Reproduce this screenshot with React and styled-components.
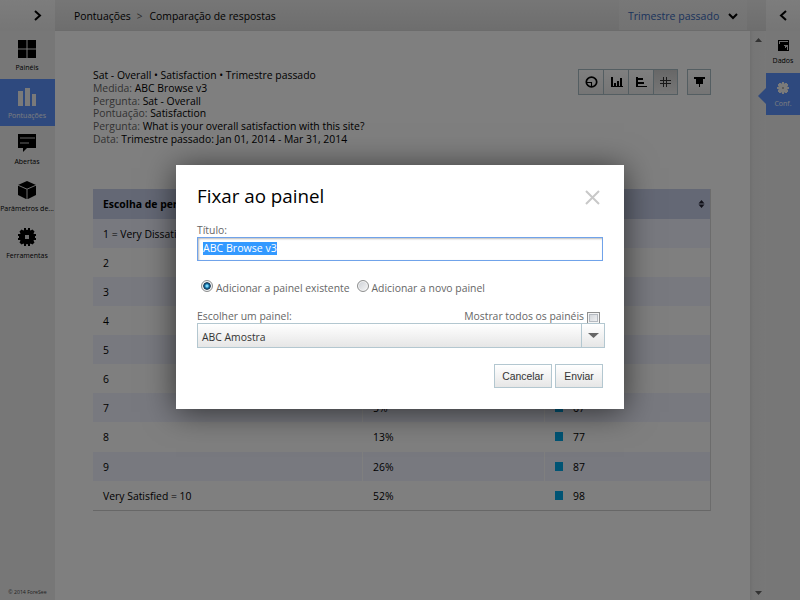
import React from "react";
import styled, { createGlobalStyle, css } from "styled-components";

const Global = createGlobalStyle`
  *, *::before, *::after { box-sizing: border-box; }
  html, body { margin: 0; padding: 0; overflow: hidden; background: #fff; }
  body { font-family: "Open Sans", "Noto Sans", sans-serif; font-size: 10.4px; color: #000; }
`;

const Page = styled.div`
  position: relative;
  display: grid;
  grid-template-columns: 55px 1fr 34px;
  width: 800px;
  height: 600px;
  overflow: hidden;
  background: #fff;
`;

const Sidebar = styled.nav`
  display: flex;
  flex-direction: column;
  background: #eee;
`;

const Toggle = styled.div`
  display: flex;
  align-items: center;
  justify-content: ${(p) => (p.$end ? "flex-end" : "center")};
  padding-right: ${(p) => (p.$end ? "13px" : "0")};
  height: 31px;
  flex: none;
  background: linear-gradient(#fafafa, #ececec);
`;

const NavItem = styled.div`
  position: relative;
  display: flex;
  flex-direction: column;
  align-items: center;
  flex: none;
  height: ${(p) => (p.$small ? 42 : 47)}px;
  padding-top: 9px;
  margin-top: ${(p) => (p.$gap ? "1px" : "0")};
  margin-bottom: ${(p) => (p.$gap ? "-1px" : "0")};
  white-space: nowrap;
  font-size: 7px;
  line-height: 10px;
  color: ${(p) => (p.$active ? "#f2f6ff" : "#000")};
  background: ${(p) => (p.$active ? "#5c92fc" : "transparent")};
  svg { flex: none; margin-bottom: 5px; }
`;

const MainNav = styled(Sidebar)`
  ${NavItem} { padding-right: 1px; }
`;

const Pointer = styled.svg`
  position: absolute;
  left: -8px;
  top: 15px;
`;

const Copyright = styled.div`
  margin-top: auto;
  padding-bottom: 3px;
  text-align: center;
  font-size: 5.2px;
  line-height: 10px;
  color: #444;
`;

const Main = styled.main`
  display: flex;
  flex-direction: column;
  min-width: 0;
`;

const TopBar = styled.header`
  display: flex;
  align-items: center;
  height: 31px;
  flex: none;
  padding: 1px 19px 0 19px;
  background: linear-gradient(#ededed, #dcdcdc);
  border-bottom: 1px solid #d8d8d8;
  white-space: nowrap;
`;

const CrumbSep = styled.span`
  margin: 0 7px 0 6px;
  font-size: 10px;
  color: #555;
`;

const Period = styled.div`
  display: flex;
  align-items: center;
  gap: 9px;
  width: 128px;
  height: 30px;
  margin-top: -1px;
  margin-left: auto;
  padding: 2px 0 0 9px;
  font-size: 10.55px;
  color: #3566b8;
  background: linear-gradient(#f0f0f0, #e6e6e6);
`;

const Body = styled.div`
  display: flex;
  flex: 1;
  min-height: 0;
`;

const Content = styled.section`
  flex: 1;
  padding: 38px 0 0 38px;
`;

const ScrollTrack = styled.div`
  display: flex;
  flex-direction: column;
  justify-content: space-between;
  align-items: center;
  width: 16px;
  padding: 7px 0 5px;
  background: linear-gradient(to right, #dedede, #ebebeb 3px, #f0f0f0);
`;

const Intro = styled.div`
  display: flex;
  justify-content: space-between;
  width: 618px;
  height: 120px;
`;

const Details = styled.div`
  white-space: nowrap;
`;

const Line = styled.div`
  height: 12.8px;
  line-height: 13px;
`;

const Label = styled.span`
  color: #666;
`;

const Tools = styled.div`
  display: flex;
  height: 26px;
  gap: 9px;
`;

const ToolGroup = styled.div`
  display: flex;
  border: 1px solid #a9bcc5;
`;

const Tool = styled.div`
  display: flex;
  align-items: center;
  justify-content: center;
  width: ${(p) => p.$w || 25}px;
  background: ${(p) => (p.$on ? "linear-gradient(#cfcfcf, #ededed)" : "linear-gradient(#fff, #ebebeb)")};
  border-left: ${(p) => (p.$divided ? "1px solid #a9bcc5" : "0")};
`;

const Table = styled.div`
  width: 618px;
  border-right: 1px solid #d9d9d9;
  border-bottom: 1px solid #cfcfcf;
`;

const Row = styled.div`
  display: grid;
  grid-template-columns: 269px 181px 1fr;
  gap: 1px;
  height: ${(p) => p.$h || 29}px;
`;

const HeadRow = styled(Row)`
  grid-template-columns: 1fr auto;
  align-items: center;
  height: 30px;
  padding: 0 5px 0 10px;
  font-weight: 700;
  background: #c8d0ea;
`;

const Cell = styled.div`
  display: flex;
  align-items: center;
  padding-left: 10px;
  background: ${(p) => (p.$alt ? "#f0f2fe" : "#fff")};
`;

const Swatch = styled.span`
  width: 8px;
  height: 9px;
  margin: -1px 10px 0 0;
  background: #00a8e8;
`;

const Overlay = styled.div`
  position: absolute;
  inset: 0;
  background: rgba(0, 0, 0, 0.5);
`;

const Dialog = styled.div`
  position: absolute;
  left: 176px;
  top: 165px;
  width: 448px;
  height: 244px;
  padding: 18px 19px 0 21px;
  background: #fff;
  box-shadow: 0 3px 30px rgba(0, 0, 0, 0.6);
  color: #666;
  white-space: nowrap;
`;

const DialogHead = styled.div`
  display: flex;
  justify-content: space-between;
  height: 41px;
  padding-right: 5px;
`;

const Title = styled.h1`
  margin: 0;
  font-size: 18.8px;
  font-weight: 400;
  line-height: 27px;
  color: #000;
`;

const CloseIcon = styled.svg`
  margin-top: 7px;
`;

const FieldLabel = styled.div`
  height: 13px;
  line-height: 13px;
`;

const TextField = styled.div`
  display: flex;
  align-items: flex-start;
  width: 406px;
  height: 24px;
  padding: 4px 5px 0;
  border: 1px solid #70a3ea;
  box-shadow: inset 1px 1px 2px #bbb;
`;

const Selected = styled.span`
  height: 13px;
  line-height: 13px;
  font-size: 10.6px;
  color: #fff;
  background: #3399ff;
`;

const Choices = styled.div`
  display: flex;
  height: 15px;
  margin: 19px 0 0 4px;
`;

const Radio = styled.span`
  flex: none;
  width: 12px;
  height: 12px;
  margin: 0 3px 0 0;
  border: 1px solid #8e8f8f;
  border-radius: 50%;
  box-shadow: inset 0 0 0 1px #f4f4f4;
  background: ${(p) =>
    p.$on
      ? "radial-gradient(circle at 50% 50%, #7fd8fa 0 1px, #1679b0 2px, #12314d 3.4px, #dce3e8 4.2px)"
      : "linear-gradient(135deg, #cbcfd5, #f6f6f6)"};
`;

const ChoiceText = styled.span`
  height: 15px;
  margin-top: 1px;
  margin-right: ${(p) => p.$mr || 0}px;
  line-height: 15px;
`;

const PickerHead = styled.div`
  display: flex;
  height: 13px;
  margin-top: 15px;
  line-height: 13px;
`;

const ShowAll = styled.span`
  display: flex;
  margin-left: auto;
  padding-right: 5px;
`;

const CheckBox = styled.span`
  width: 13px;
  height: 11px;
  margin: 2px 0 0 3px;
  border: 1px solid #8e8f8f;
  border-bottom: 0;
  box-shadow: inset 0 0 0 1px #f4f4f4, inset 0 0 0 2px #b5bac1;
  background: linear-gradient(135deg, #cbcfd5, #f6f6f6);
`;

const controlFace = css`
  border: 1px solid #b3c7d0;
  background: linear-gradient(#fff, #e6e6e6);
  color: #333;
`;

const Select = styled.div`
  ${controlFace}
  display: flex;
  align-items: center;
  width: 408px;
  height: 25px;
  padding-left: 4px;
`;

const SelectText = styled.span`
  padding-top: 2px;
`;

const SelectArrow = styled.span`
  display: flex;
  align-items: center;
  justify-content: center;
  width: 23px;
  height: 23px;
  margin-left: auto;
  border-left: 1px solid #b3c7d0;
`;

const Actions = styled.div`
  display: flex;
  justify-content: flex-end;
  gap: 3px;
  margin-top: 16px;
  padding-right: 2px;
`;

const Button = styled.div`
  ${controlFace}
  width: ${(p) => p.$w}px;
  height: 24px;
  line-height: 23px;
  text-align: center;
  font-family: "Liberation Sans", Arial, sans-serif;
  font-size: 10.4px;
`;

const Chevron = ({ d, w, h }) => (
  <svg width={w} height={h} viewBox={`0 0 ${w} ${h}`} fill="none" stroke="#000" strokeWidth="2">
    <path d={d} />
  </svg>
);

const Triangle = ({ w = 7, h = 4, up }) => (
  <svg width={w} height={h} viewBox="0 0 7 4" preserveAspectRatio="none">
    <path d={up ? "M0 4L3.5 0L7 4Z" : "M0 0H7L3.5 4Z"} fill="#666" />
  </svg>
);

const NavIcon = ({ children }) => (
  <svg width="18" height="18" viewBox="0 0 18 18">{children}</svg>
);

const PanelsIcon = () => (
  <NavIcon><path d="M0 0h8.500v8.500H0zM9.500 0H18v8.500H9.500zM0 9.500h8.500V18H0zM9.500 9.500H18V18H9.500z" /></NavIcon>
);
const ScoresIcon = () => (
  <NavIcon><path fill="#f4f4f4" d="M0 3h5v15H0zM7 0h5v18H7zM14 6h4v12h-4z" /></NavIcon>
);
const OpenIcon = () => (
  <NavIcon>
    <path d="M0 0h18v14H9l-4 4v-4H0z" />
    <path d="M2 4h15M2 9h9" stroke="#ccc" strokeWidth="1.2" />
  </NavIcon>
);
const CubeIcon = () => (
  <NavIcon>
    <path d="M9 0L18 4v10l-9 4.500L0 14V4z" />
    <path d="M0 4.200l9 4 9-4M9 8.200V18" stroke="#ddd" strokeWidth="1" fill="none" />
  </NavIcon>
);
const GearIcon = () => (
  <NavIcon>
    <circle cx="9" cy="9" r="7.300" />
    <path d="M6 0h2v2h2V0h2v3H6zM6 18h2v-2h2v2h2v-3H6zM0 6h3v6H0v-2h1V8H0zM18 6h-3v6h3v-2h-1V8h1zM1.500 3.500l2-2 3 1.500-3.500 3.500zM16.500 3.500l-2-2-3 1.500 3.500 3.500zM1.500 14.500l2 2 3-1.500-3.500-3.500zM16.500 14.500l-2 2-3-1.500 3.500-3.500z" />
    <path d="M7 7h4v4H7z" fill="#ddd" />
  </NavIcon>
);
const DataIcon = () => (
  <svg width="11" height="11" viewBox="0 0 11 11" shapeRendering="crispEdges">
    <path d="M0 0h11v11H0z" />
    <path d="M1 1h9v1H1zM1 2h1v2H1zM6 5h4v5H9V7H8v1H7V6H6z" fill="#ddd" />
  </svg>
);
const SmallGear = () => (
  <svg width="12" height="12" viewBox="0 0 12 12">
    <path fill="#f4f4f4" d="M5 0h2v1.500h1V1h2v1h1v2h-.5v1H12v2h-1.500v1h.5v2h-1v1H8v-.5H7V12H5v-1.500H4v.5H2v-1H1V8h.5V7H0V5h1.500V4H1V2h1V1h2v.5h1z" />
    <path fill="#777" d="M5 5.500h2v1H5z" />
  </svg>
);
const ToolIcon = ({ d, fill = "#000" }) => (
  <svg width="13" height="12" viewBox="0 0 13 12" shapeRendering="crispEdges">
    <path d={d} fill={fill} />
  </svg>
);
const PieIcon = () => (
  <svg width="13" height="12" viewBox="0 0 13 12">
    <ellipse cx="6.500" cy="6" rx="5.200" ry="4.800" fill="none" stroke="#000" strokeWidth="1.700" />
    <path d="M2 6.500h5M6.500 6v4" stroke="#000" strokeWidth="1.100" fill="none" />
  </svg>
);
const SortIcon = () => (
  <svg width="7" height="8" viewBox="0 0 7 8"><path d="M3.500 0L6.500 3.500h-6zM.5 4.500h6L3.500 8z" fill="#223" /></svg>
);

const rows = [
  ["1 = Very Dissatisfied", "1%", 10],
  ["2", "1%", 22],
  ["3", "1%", 31],
  ["4", "1%", 39],
  ["5", "1%", 47],
  ["6", "2%", 56],
  ["7", "5%", 67],
  ["8", "13%", 77],
  ["9", "26%", 87],
  ["Very Satisfied = 10", "52%", 98],
];

const details = [
  ["Medida:", "ABC Browse v3"],
  ["Pergunta:", "Sat - Overall"],
  ["Pontuação:", "Satisfaction"],
  ["Pergunta:", "What is your overall satisfaction with this site?"],
  ["Data:", "Trimestre passado: Jan 01, 2014 - Mar 31, 2014"],
];

export default function App() {
  return (
    <>
      <Global />
      <Page>
        <MainNav>
          <Toggle $end><Chevron w={8} h={11} d="M1 1L6 5.500L1 10" /></Toggle>
          <NavItem><PanelsIcon />Painéis</NavItem>
          <NavItem $active $gap><ScoresIcon />Pontuações</NavItem>
          <NavItem><OpenIcon />Abertas</NavItem>
          <NavItem><CubeIcon />Parâmetros de...</NavItem>
          <NavItem><GearIcon />Ferramentas</NavItem>
          <Copyright>© 2014 ForeSee</Copyright>
        </MainNav>

        <Main>
          <TopBar>
            <span>Pontuações</span>
            <CrumbSep>&gt;</CrumbSep>
            <span>Comparação de respostas</span>
            <Period>Trimestre passado<Chevron w={10} h={7} d="M1 1L5 5L9 1" /></Period>
          </TopBar>
          <Body>
            <Content>
              <Intro>
                <Details>
                  <Line>Sat - Overall • Satisfaction • Trimestre passado</Line>
                  {details.map(([label, value]) => (
                    <Line key={label + value}><Label>{label}</Label> {value}</Line>
                  ))}
                </Details>
                <Tools>
                  <ToolGroup>
                    <Tool $w={24}><PieIcon /></Tool>
                    <Tool $divided><ToolIcon d="M1 1h2v9h10v1H1zM4 7h2v3H4zM7 5h2v5H7zM10 2h2v8h-2z" /></Tool>
                    <Tool $divided><ToolIcon d="M1 1h2v10H1zM3 2h5v2H3zM3 6h6v2H3zM3 10h9v1H3z" /></Tool>
                    <Tool $divided $on $w={24}><ToolIcon fill="#333" d="M4 1h1v10H4zM7 1h1v10H7zM1 4h11v1H1zM1 7h11v1H1z" /></Tool>
                  </ToolGroup>
                  <ToolGroup>
                    <Tool $w={22}><ToolIcon d="M1 1h11v2H1zM3 3h7v5H3zM6 8h1v3H6z" /></Tool>
                  </ToolGroup>
                </Tools>
              </Intro>
              <Table>
                <HeadRow><span>Escolha de pergunta</span><SortIcon /></HeadRow>
                {rows.map(([name, share, score], i) => (
                  <Row key={name} $h={i === 7 ? 30 : 29}>
                    <Cell $alt={i % 2 === 0}>{name}</Cell>
                    <Cell $alt={i % 2 === 0}>{share}</Cell>
                    <Cell $alt={i % 2 === 0}><Swatch />{score}</Cell>
                  </Row>
                ))}
              </Table>
            </Content>
            <ScrollTrack><Triangle up /><Triangle /></ScrollTrack>
          </Body>
        </Main>

        <Sidebar>
          <Toggle><Chevron w={8} h={11} d="M7 1L2 5.500L7 10" /></Toggle>
          <NavItem $small><DataIcon />Dados</NavItem>
          <NavItem $small $active>
            <Pointer width="8" height="16" viewBox="0 0 8 16"><path d="M8 0L0 8L8 16Z" fill="#5c92fc" /></Pointer>
            <SmallGear />Conf.
          </NavItem>
        </Sidebar>

        <Overlay />
        <Dialog>
          <DialogHead>
            <Title>Fixar ao painel</Title>
            <CloseIcon width="15" height="15" viewBox="0 0 15 15" stroke="#c8c8c8" strokeWidth="2">
              <path d="M1 1L14 14M14 1L1 14" />
            </CloseIcon>
          </DialogHead>
          <FieldLabel>Título:</FieldLabel>
          <TextField><Selected>ABC Browse v3</Selected></TextField>
          <Choices>
            <Radio $on /><ChoiceText $mr={7}>Adicionar a painel existente</ChoiceText>
            <Radio /><ChoiceText>Adicionar a novo painel</ChoiceText>
          </Choices>
          <PickerHead>
            <span>Escolher um painel:</span>
            <ShowAll>Mostrar todos os painéis<CheckBox /></ShowAll>
          </PickerHead>
          <Select><SelectText>ABC Amostra</SelectText><SelectArrow><Triangle w={11} h={5} /></SelectArrow></Select>
          <Actions>
            <Button $w={58}>Cancelar</Button>
            <Button $w={48}>Enviar</Button>
          </Actions>
        </Dialog>
      </Page>
    </>
  );
}
